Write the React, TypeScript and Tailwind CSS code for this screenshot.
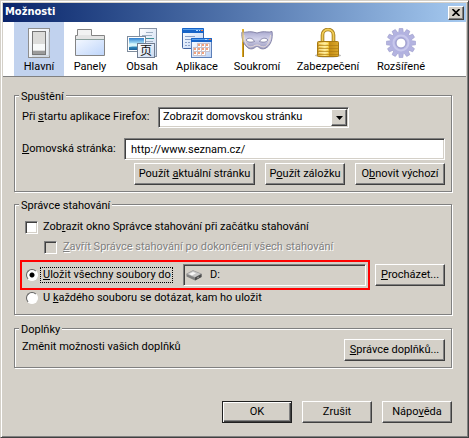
import type { ReactNode } from 'react';
import { clsx } from 'clsx';

const RAISED =
  'border border-t-white border-l-white border-r-[#404040] border-b-[#404040] bg-[#d4d0c8] shadow-[inset_-1px_-1px_0_#808080]';
const SUNKEN =
  'border border-t-[#808080] border-l-[#808080] border-r-white border-b-white shadow-[inset_1px_1px_0_#404040,inset_-1px_-1px_0_#d4d0c8]';

function GeneralIcon() {
  return (
    <svg width="30" height="30" viewBox="0 0 30 30" aria-hidden="true">
      <defs>
        <linearGradient id="switch-plate" x1="0" y1="0" x2="1" y2="1">
          <stop offset="0" stopColor="#fff" />
          <stop offset="1" stopColor="#dfe6ee" />
        </linearGradient>
      </defs>
      <rect x="4.5" y="0.5" width="21" height="29" fill="url(#switch-plate)" stroke="#8e8e8e" />
      <path d="M8 28h17V4" fill="none" stroke="#c3cbd5" />
      <rect x="8.5" y="3.5" width="13" height="23" fill="#f8fafa" stroke="#777" />
      <path d="M9 4h12v12H9z" fill="#dcdcda" />
      <path d="M9 22h12v1H9z" fill="#dcdcdc" />
      <path d="M9 23h12v3H9z" fill="#9b9b9b" />
    </svg>
  );
}

function TabsIcon() {
  return (
    <svg width="30" height="30" viewBox="0 0 30 30" aria-hidden="true">
      <defs>
        <linearGradient id="folder-body" x1="0" y1="0" x2="1" y2="1">
          <stop offset="0" stopColor="#f4f8ff" />
          <stop offset="1" stopColor="#bfd6fb" />
        </linearGradient>
      </defs>
      <path d="M0.500 27.500V7.500H2.500V1.500H16.500V7.500H29.500V27.500Z" fill="#e4e4e4" stroke="#848484" />
      <path d="M1 11h28v16H1z" fill="url(#folder-body)" />
      <path d="M1 11.500h28" stroke="#8aa09c" />
      <path d="M3 2h13v5H3z" fill="#f2f2f2" />
    </svg>
  );
}

function ContentIcon() {
  return (
    <svg width="30" height="30" viewBox="0 0 30 30" aria-hidden="true">
      <defs>
        <linearGradient id="photo-sky" x1="0" y1="0" x2="0" y2="1">
          <stop offset="0" stopColor="#2f7fd0" />
          <stop offset="0.500" stopColor="#b9ecfa" />
          <stop offset="0.620" stopColor="#3b9ccb" />
          <stop offset="1" stopColor="#1a5f9a" />
        </linearGradient>
        <linearGradient id="paper" x1="0" y1="0" x2="1" y2="1">
          <stop offset="0" stopColor="#fff" />
          <stop offset="1" stopColor="#c9d9f0" />
        </linearGradient>
      </defs>
      <rect x="12.500" y="0.500" width="17" height="28" fill="url(#paper)" stroke="#8793a5" />
      <path d="M19 4.500h7M15 7.500h10M15 13.500h11" stroke="#9fb0c4" />
      <path d="M15 10.500h12" stroke="#3c8e95" />
      <rect x="0.500" y="8.500" width="18" height="15" fill="#fff" stroke="#7f8c9c" />
      <rect x="2" y="10" width="15" height="12" fill="url(#photo-sky)" />
      <path d="M2 16c4-2 7 1 15 0v2c-6 1-10 0-15 1z" fill="#d9f5fa" />
      <rect x="10.500" y="15.500" width="17" height="14" fill="url(#paper)" stroke="#6f7c90" />
      <text
        x="19"
        y="27"
        textAnchor="middle"
        fontSize="12"
        fill="#111"
        fontFamily='"Noto Sans CJK SC", sans-serif'
      >
        页
      </text>
    </svg>
  );
}

function ApplicationsIcon() {
  const cells = [
    [16, 15], [20, 15], [24, 15],
    [12, 19], [16, 19], [20, 19], [24, 19],
    [12, 23], [16, 23], [20, 23],
  ];
  return (
    <svg width="30" height="30" viewBox="0 0 30 30" aria-hidden="true">
      <defs>
        <linearGradient id="app-body" x1="0" y1="0" x2="1" y2="1">
          <stop offset="0" stopColor="#fff" />
          <stop offset="1" stopColor="#bcd2f5" />
        </linearGradient>
      </defs>
      <rect x="0.500" y="0.500" width="21" height="20" rx="1" fill="url(#app-body)" stroke="#41639f" />
      <path d="M0 1q0-1 1-1h20q1 0 1 1v4H0z" fill="#1764c8" />
      <path d="M1 1.500h20" stroke="#5aa0ea" />
      <path d="M14 2h2v1h-2zM17 2h1v1h-1z" fill="#b8dcff" />
      <path d="M19 2h2v1h-2z" fill="#f4743a" />
      <path d="M3 8.500h10M3 11.500h6M3 14.500h2M6 14.500h2M3 17.500h2M6 17.500h2" stroke="#8aa0c8" />
      <rect x="9.500" y="10.500" width="20" height="19" fill="url(#app-body)" stroke="#5c7fb8" />
      <path d="M9 11q0-1 1-1h19q1 0 1 1v3H9z" fill="#1764c8" />
      <path d="M10 11.500h19" stroke="#5aa0ea" />
      <path d="M23 11.500h2" stroke="#b8dcff" />
      <path d="M27 11h2v1h-2z" fill="#f4743a" />
      {cells.map(([x, y]) => (
        <g key={`${x}-${y}`}>
          <rect x={x - 0.5} y={y + 0.5} width="4" height="4" fill="#fff" stroke="#c9c2cc" />
          <rect x={x} y={y + 1} width="2" height="2" fill="#f4a27a" />
        </g>
      ))}
    </svg>
  );
}

function PrivacyIcon() {
  return (
    <svg width="32" height="30" viewBox="0 0 32 30" aria-hidden="true">
      <defs>
        <linearGradient id="mask-face" x1="0" y1="0" x2="0" y2="1">
          <stop offset="0" stopColor="#a9a9cf" />
          <stop offset="0.450" stopColor="#d3d3ea" />
          <stop offset="1" stopColor="#9796bd" />
        </linearGradient>
      </defs>
      <path d="M1 1h2v28H1z" fill="#d9a51c" />
      <path d="M2.500 2v27" stroke="#a97a12" />
      <path
        d="M1 4C5 5 7 3 12 4Q16 6 20 4C25 3 27 5 31 3.500C32 10 30 18 24 20.500C19 22 18 18.500 16 18.500S13 22 8 20.500C3 18 0 10 1 4Z"
        fill="url(#mask-face)"
        stroke="#8584a8"
      />
      <path
        d="M3 7C3 12 5 18 9 19C13 19 13 17 16 17S19 19 23 19C27 18 29 12 29.500 7"
        fill="none"
        stroke="#e8ddd8"
      />
      <path d="M5 12C7 9 12 10 13.500 13.500C10 14.500 7 14.500 5 12Z" fill="#fff" stroke="#77769b" strokeWidth="0.800" />
      <path d="M27 12C25 9 20 10 18.500 13.500C22 14.500 25 14.500 27 12Z" fill="#fff" stroke="#77769b" strokeWidth="0.800" />
      <path d="M2 1v13" stroke="#efc74c" />
    </svg>
  );
}

function SecurityIcon() {
  return (
    <svg width="30" height="30" viewBox="0 0 30 30" aria-hidden="true">
      <defs>
        <linearGradient id="lock-body" x1="0" y1="0" x2="1" y2="0">
          <stop offset="0" stopColor="#d8a326" />
          <stop offset="0.350" stopColor="#ffe98c" />
          <stop offset="0.520" stopColor="#f2c73c" />
          <stop offset="0.560" stopColor="#c48c12" />
          <stop offset="1" stopColor="#dba92c" />
        </linearGradient>
      </defs>
      <ellipse cx="15" cy="27.500" rx="13" ry="2" fill="#9c9c9c" opacity="0.700" />
      <path d="M9.500 15V7a5.500 5.500 0 0 1 11 0v8" fill="none" stroke="#a17a1c" strokeWidth="3.600" />
      <path d="M9.500 15V7a5.500 5.500 0 0 1 11 0v8" fill="none" stroke="#f0cc55" strokeWidth="1.800" />
      <rect x="4.500" y="13.500" width="21" height="15" rx="1" fill="url(#lock-body)" stroke="#a67a14" />
      <path d="M5 17.500h20M5 20.500h20M5 23.500h20M5 26.500h20" stroke="#a87812" opacity="0.600" />
      <path d="M6 15.500h9M6 18.500h9M6 21.500h9M6 24.500h9" stroke="#fff0a8" opacity="0.700" />
    </svg>
  );
}

function AdvancedIcon() {
  const teeth = [0, 30, 60, 90, 120, 150, 180, 210, 240, 270, 300, 330];
  return (
    <svg width="30" height="30" viewBox="0 0 30 30" aria-hidden="true">
      {teeth.map((angle) => (
        <path
          key={angle}
          d="M12.500 6L13.200 0.500H16.800L17.500 6Z"
          fill="#b4b4e0"
          stroke="#9a9acb"
          strokeWidth="0.600"
          transform={`rotate(${angle} 15 15)`}
        />
      ))}
      <circle cx="15" cy="15" r="8" fill="none" stroke="#b2b2e0" strokeWidth="6" />
      <circle cx="15" cy="15" r="7.500" fill="none" stroke="#c8c8ec" strokeWidth="2" />
      <circle cx="15" cy="15" r="5" fill="#fff" stroke="#9292c6" />
    </svg>
  );
}

function DriveIcon() {
  return (
    <svg width="16" height="16" viewBox="0 0 16 16" aria-hidden="true">
      <path d="M0.500 7L7 3.500L15.500 7V10L9 13.500L0.500 9.500Z" fill="#808080" />
      <path d="M0.500 7L7 3.500L15.500 7L9 10.500Z" fill="#c9c9c9" stroke="#909090" strokeWidth="0.500" />
      <path d="M9 10.500L15.500 7V10L9 13.500Z" fill="#4c4c4c" />
      <path d="M3 7L7 5L10 6.300L6 8.500Z" fill="#f7f7f7" />
      <path d="M11 11l2-1" stroke="#9a9a9a" />
    </svg>
  );
}

const TABS = [
  { label: 'Hlavní', width: 'w-[50px]', icon: <GeneralIcon /> },
  { label: 'Panely', width: 'w-[52px]', icon: <TabsIcon /> },
  { label: 'Obsah', width: 'w-[52px]', icon: <ContentIcon /> },
  { label: 'Aplikace', width: 'w-[58px]', icon: <ApplicationsIcon /> },
  { label: 'Soukromí', width: 'w-[62px]', icon: <PrivacyIcon /> },
  { label: 'Zabezpečení', width: 'w-[80px]', icon: <SecurityIcon /> },
  { label: 'Rozšířené', width: 'w-[66px]', icon: <AdvancedIcon /> },
];

interface ButtonProps {
  children: ReactNode;
  className?: string;
  primary?: boolean;
}

function Button({ children, className, primary }: ButtonProps) {
  return (
    <button
      type="button"
      className={clsx(
        'h-[22px] shrink-0 text-center leading-4 whitespace-nowrap',
        primary
          ? 'border border-[#202020] bg-[#d4d0c8] shadow-[inset_1px_1px_0_#fff,inset_-1px_-1px_0_#404040,inset_-2px_-2px_0_#808080]'
          : RAISED,
        className,
      )}
    >
      {children}
    </button>
  );
}

interface GroupProps {
  title: string;
  children: ReactNode;
  className?: string;
}

function Group({ title, children, className }: GroupProps) {
  return (
    <fieldset
      className={clsx(
        'relative min-w-0 border border-[#808080] shadow-[1px_1px_0_#fff,inset_1px_1px_0_#fff]',
        className,
      )}
    >
      <legend className="absolute -top-[7px] left-1 bg-[#d4d0c8] px-0.5 leading-4">{title}</legend>
      {children}
    </fieldset>
  );
}

export default function App() {
  return (
    <div className='border border-[#d4d0c8] border-r-[#404040] border-b-[#404040] bg-[#d4d0c8] font-["Roboto",sans-serif] text-[11px] text-black shadow-[inset_1px_1px_0_#fff,inset_-1px_-1px_0_#808080]'>
      <div className="px-0.5 pt-0.5 pb-3.5">
        <header className="flex h-[19px] items-center justify-between bg-linear-to-r from-[#0a246a] to-[#a6caf0] pr-0.5 pl-0.5">
          <h1 className='font-["DejaVu_Sans_Condensed","DejaVu_Sans",sans-serif] text-[11px] font-bold text-white'>
            Možnosti
          </h1>
          <button
            type="button"
            aria-label="Zavřít"
            className={clsx('flex h-3.5 w-4 items-center justify-center', RAISED)}
          >
            <svg width="8" height="7" viewBox="0 0 8 7" aria-hidden="true">
              <path d="M0.500 0L7.500 7M7.500 0L0.500 7" stroke="#000" strokeWidth="1.600" />
            </svg>
          </button>
        </header>

        <nav className="flex border-b border-[#808080] bg-white pl-[11px]">
          {TABS.map((tab, i) => (
            <button
              key={tab.label}
              type="button"
              className={clsx(
                'flex h-[54px] flex-col items-center pt-1.5 leading-[18px]',
                tab.width,
                i === 0 && 'bg-[#c1d2ee]',
              )}
            >
              {tab.icon}
              {tab.label}
            </button>
          ))}
        </nav>

        <main className="pt-[18px] pr-[14px] pl-[11px]">
          <Group title="Spuštění" className="h-[97px] pt-[11px] pr-1.5 pl-[7px]">
            <div className="flex h-[21px] items-center">
              <label htmlFor="startup" className="w-[136px] whitespace-nowrap">
                Při <u>s</u>tartu aplikace Firefox:
              </label>
              <div className="relative">
                <select
                  id="startup"
                  className={clsx('h-[21px] w-[191px] appearance-none bg-white pl-1', SUNKEN)}
                >
                  <option>Zobrazit domovskou stránku</option>
                </select>
                <span
                  className={clsx(
                    'pointer-events-none absolute top-0.5 right-0.5 flex h-[17px] w-4 items-center justify-center',
                    RAISED,
                  )}
                >
                  <svg width="7" height="4" viewBox="0 0 7 4" aria-hidden="true">
                    <path d="M0 0H7L3.500 4Z" />
                  </svg>
                </span>
              </div>
            </div>
            <div className="mt-2.5 flex items-center">
              <label htmlFor="homepage" className="w-[102px] whitespace-nowrap">
                <u>D</u>omovská stránka:
              </label>
              <input
                id="homepage"
                type="text"
                defaultValue="http://www.seznam.cz/"
                className={clsx('h-[22px] min-w-0 flex-1 bg-white pl-1.5', SUNKEN)}
              />
            </div>
            <div className="mt-[3px] flex justify-end gap-2.5">
              <Button className="w-[121px]">
                Použít <u>a</u>ktuální stránku
              </Button>
              <Button className="w-[80px]">
                P<u>o</u>užít záložku
              </Button>
              <Button className="w-[90px]">
                O<u>b</u>novit výchozí
              </Button>
            </div>
          </Group>

          <Group title="Správce stahování" className="mt-3 h-[111px] pt-3.5 pr-1.5 pl-[5px]">
            <label className="flex h-4 items-center gap-[5px] pl-[5px]">
              <input type="checkbox" className={clsx('size-[13px] appearance-none bg-white', SUNKEN)} />
              <span>
                Zob<u>r</u>azit okno Správce stahování při začátku stahování
              </span>
            </label>
            <label className="mt-1 flex h-4 items-center gap-1.5 pl-6 text-[#808080] [text-shadow:1px_1px_0_#fff]">
              <input type="checkbox" disabled className={clsx('size-[13px] appearance-none', SUNKEN)} />
              <span>
                <u>Z</u>avřít Správce stahování po dokončení všech stahování
              </span>
            </label>
            <div className="mt-[5px] flex items-center gap-[5px]">
              <div className="flex h-[30px] min-w-0 flex-1 items-center border-2 border-[#f00] pr-0.5 pl-1">
                <Radio id="save-to" defaultChecked />
                <label
                  htmlFor="save-to"
                  className="ml-0.5 h-4 w-[133px] border border-dotted border-black pl-0.5 leading-3.5 whitespace-nowrap"
                >
                  <u>U</u>ložit všechny soubory do
                </label>
                <div className={clsx('ml-2.5 flex h-[22px] min-w-0 flex-1 items-center pl-0.5', SUNKEN)}>
                  <DriveIcon />
                  <input
                    type="text"
                    readOnly
                    aria-label="Složka pro stahování"
                    value="D:"
                    className="ml-2 w-20 min-w-0"
                  />
                </div>
              </div>
              <Button className="w-[70px]">
                <u>P</u>rocházet...
              </Button>
            </div>
            <div className="flex h-4 items-center pl-1.5">
              <Radio id="ask-each" />
              <label htmlFor="ask-each" className="ml-[5px]">
                U <u>k</u>aždého souboru se dotázat, kam ho uložit
              </label>
            </div>
          </Group>

          <Group title="Doplňky" className="mt-[13px] flex h-10 items-start justify-between pt-2.5 pr-1.5 pl-[7px]">
            <span className="leading-4">Změnit možnosti vašich doplňků</span>
            <Button className="w-[101px]">
              <u>S</u>právce doplňků...
            </Button>
          </Group>

          <footer className="mt-[33px] flex justify-end gap-2.5">
            <Button primary className="w-[70px]">
              OK
            </Button>
            <Button className="w-[70px]">Zrušit</Button>
            <Button className="w-[70px]">
              Nápo<u>v</u>ěda
            </Button>
          </footer>
        </main>
      </div>
    </div>
  );
}

function Radio({ id, defaultChecked }: { id: string; defaultChecked?: boolean }) {
  return (
    <input
      id={id}
      type="radio"
      name="download-target"
      defaultChecked={defaultChecked}
      className="size-3 shrink-0 appearance-none rounded-full border border-t-[#606060] border-r-white border-b-white border-l-[#606060] bg-white checked:bg-[radial-gradient(circle,#000_0_2px,#fff_3px)]"
    />
  );
}
